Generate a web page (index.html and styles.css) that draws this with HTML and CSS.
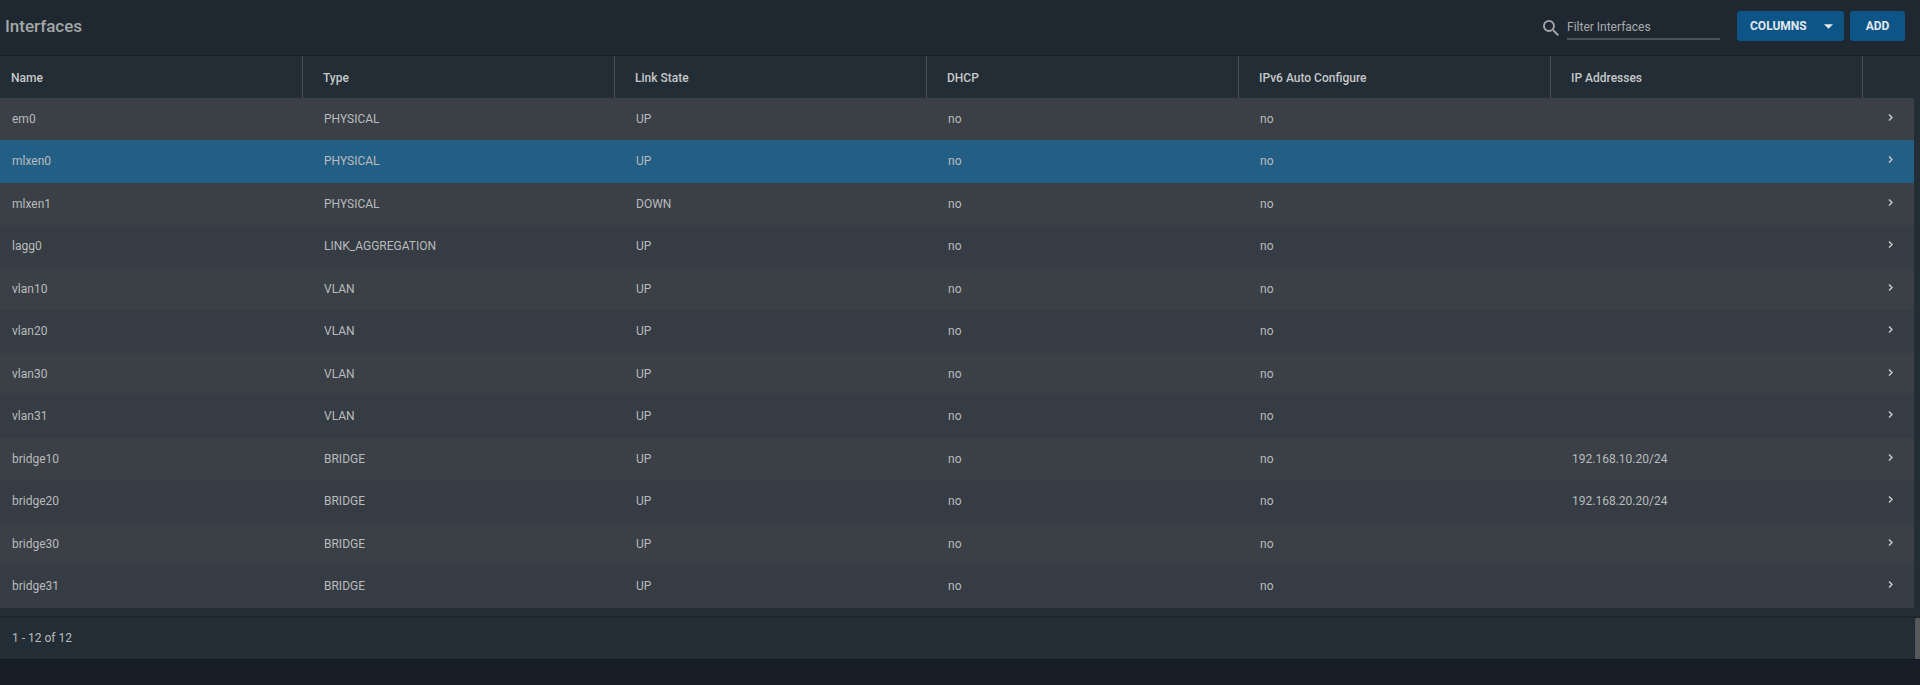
FILE: index.html
```html
<!DOCTYPE html>
<html lang="en">
<head>
    <meta charset="UTF-8">
    <meta name="viewport" content="width=device-width, initial-scale=1.0">
    <title>Interfaces</title>
    <link rel="stylesheet" href="styles.css">
</head>
<body>
    <main class="card">
        <header class="toolbar">
            <h1 class="title">Interfaces</h1>
            <div class="search">
                <label for="filter" aria-label="Filter Interfaces">
                    <svg class="search-icon" viewBox="3 3 17.5 17.5"><path d="M15.5 14h-.79l-.28-.27A6.471 6.471 0 0 0 16 9.5 6.5 6.5 0 1 0 9.5 16c1.61 0 3.09-.59 4.23-1.57l.27.28v.79l5 4.99L20.49 19l-4.99-5zm-6 0C7.01 14 5 11.99 5 9.5S7.01 5 9.5 5 14 7.01 14 9.5 11.99 14 9.5 14z"/></svg>
                </label>
                <input type="text" id="filter" class="filter" placeholder="Filter Interfaces">
            </div>
            <button type="button" class="btn columns">COLUMNS
                <svg class="caret" viewBox="0 0 10 5"><path d="M0 0h10L5 5z"/></svg>
            </button>
            <button type="button" class="btn add">ADD</button>
        </header>
        <div class="table-wrap">
            <table class="interfaces">
                <thead>
                    <tr>
                        <th class="name">Name</th>
                        <th>Type</th>
                        <th>Link State</th>
                        <th>DHCP</th>
                        <th>IPv6 Auto Configure</th>
                        <th>IP Addresses</th>
                        <th class="expand"></th>
                    </tr>
                </thead>
                <tbody></tbody>
            </table>
        </div>
        <footer class="footer">
            <p class="count">1 - 12 of 12</p>
            <div class="scroll-thumb"></div>
        </footer>
    </main>
    <script>
        //name, type, link state, ip address
        const interfaces = [
            ["em0", "PHYSICAL", "UP", ""],
            ["mlxen0", "PHYSICAL", "UP", ""],
            ["mlxen1", "PHYSICAL", "DOWN", ""],
            ["lagg0", "LINK_AGGREGATION", "UP", ""],
            ["vlan10", "VLAN", "UP", ""],
            ["vlan20", "VLAN", "UP", ""],
            ["vlan30", "VLAN", "UP", ""],
            ["vlan31", "VLAN", "UP", ""],
            ["bridge10", "BRIDGE", "UP", "192.168.10.20/24"],
            ["bridge20", "BRIDGE", "UP", "192.168.20.20/24"],
            ["bridge30", "BRIDGE", "UP", ""],
            ["bridge31", "BRIDGE", "UP", ""]
        ];
        const selected = "mlxen0";
        const tbody = document.querySelector('tbody');

        tbody.innerHTML = interfaces.map(([name, type, link, ip]) => `
            <tr class="${name === selected ? 'selected' : ''}">
                <td>${name}</td>
                <td>${type}</td>
                <td>${link}</td>
                <td>no</td>
                <td>no</td>
                <td>${ip}</td>
                <td class="expand">
                    <button type="button" class="chevron" aria-label="Expand ${name}">
                        <svg viewBox="0 0 5 7"><path d="M1 .5l3 3-3 3"/></svg>
                    </button>
                </td>
            </tr>`).join('');
    </script>
</body>
</html>
```
FILE: styles.css
```css
* {
    margin: 0;
    padding: 0;
    box-sizing: border-box;
}
body {
    font-family: Roboto, sans-serif;
    font-size: 12px;
    color: #b9bbbd;
    background-color: #171e27;
}
.card {
    background-color: #232d35;
    border-bottom: solid 1px #11171d;
}
.toolbar {
    display: flex;
    align-items: flex-start;
    height: 56px;
    padding: 11px 15px 0 5px;
    background-color: #1f2830;
    border-bottom: solid 1px #161e26;
}
.title {
    flex: 1;
    font-size: 17px;
    font-weight: 500;
    line-height: 30px;
    color: #a5a7a9;
}
.search {
    display: flex;
    align-items: center;
    gap: 8px;
    margin-right: 17px;
}
.search-icon {
    display: block;
    width: 16px;
    height: 16px;
    margin-top: 4px;
    fill: #a5a7a9;
}
.filter {
    width: 153px;
    height: 29px;
    padding-top: 5px;
    font: inherit;
    color: #b9bbbd;
    background: none;
    border: none;
    border-bottom: solid 2px #4b5259;
    outline: none;
}
.filter::placeholder {
    color: #a9abad;
    opacity: 1;
}
.btn {
    height: 30px;
    font: inherit;
    font-weight: 700;
    color: #e3e8ec;
    background-color: #0d5587;
    border: none;
    border-radius: 3px;
}
.columns {
    display: flex;
    align-items: center;
    justify-content: space-between;
    width: 107px;
    margin-right: 6px;
    padding: 0 11px 0 13px;
}
.caret {
    width: 9px;
    height: 5px;
    fill: #e3e8ec;
}
.add {
    width: 55px;
}
.table-wrap {
    padding: 0 6px 8px 0;
}
.interfaces {
    width: 100%;
    table-layout: fixed;
    border-collapse: collapse;
    text-align: left;
}
th {
    position: relative;
    height: 42px;
    padding: 2px 0 0 20px;
    font-weight: 500;
    color: #c6c8ca;
}
th:not(.expand)::after {
    content: "";
    position: absolute;
    top: 0;
    right: 0;
    width: 1px;
    height: 100%;
    background-color: #495158;
}
th.name {
    width: 303px;
    padding-left: 11px;
}
th.expand {
    width: 51px;
}
td {
    height: 42px;
    padding: 0 0 1px 21px;
}
td:first-child {
    padding-left: 12px;
}
tr {
    background-color: #3a4046;
}
tr:nth-child(even) {
    background-color: #363c43;
}
tr:nth-child(even) td {
    height: 43px;
}
thead tr {
    background-color: #232d35;
}
tbody tr.selected {
    background-color: #235f85;
}
td.expand {
    padding: 0 21px 5px 0;
    text-align: right;
}
.chevron {
    width: 5px;
    height: 7px;
    background: none;
    border: none;
    vertical-align: middle;
}
.chevron svg {
    display: block;
    fill: none;
    stroke: #c6c8ca;
    stroke-width: 1.5;
}
.footer {
    display: flex;
    justify-content: space-between;
    height: 43px;
    border-top: solid 2px #1d262d;
}
.count {
    padding-left: 12px;
    line-height: 40px;
}
.scroll-thumb {
    width: 5px;
    background-color: #55595c;
    border-top-left-radius: 2px;
}
```
